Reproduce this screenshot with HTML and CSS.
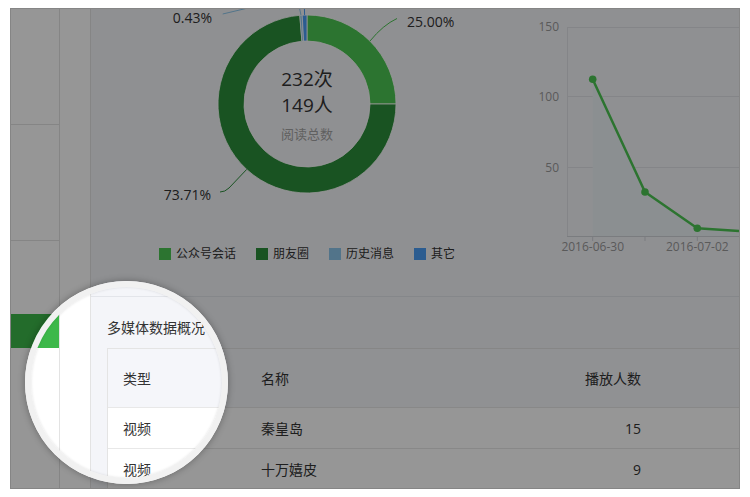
FILE: index.html
```html
<!DOCTYPE html>
<html lang="zh-CN">
<head>
<meta charset="utf-8">
<title>数据概况</title>
<link rel="stylesheet" href="styles.css">
</head>
<body>
<div class="frame">
  <aside class="nav">
    <div class="nav-item"></div>
    <div class="nav-item"></div>
    <div class="nav-gap"></div>
    <div class="nav-active"></div>
  </aside>
  <aside class="subnav"></aside>
  <main class="main">
    <section class="charts">
      <div class="donut-panel">
        <svg class="donut" width="430" height="235" viewBox="0 0 430 235">
          <g stroke="#ffffff" stroke-width="0.8" stroke-linejoin="round">
            <path fill="#4cc552" d="M216 6 A89 89 0 0 1 305 95 L279 95 A63 63 0 0 0 216 32 Z"/>
            <path fill="#2c8e3b" d="M305 95 A89 89 0 1 1 208.80 6.29 L210.90 32.21 A63 63 0 1 0 279 95 Z"/>
            <path fill="#8cc6ea" d="M208.80 6.29 A89 89 0 0 1 211.19 6.13 L212.60 32.09 A63 63 0 0 0 210.90 32.21 Z"/>
            <path fill="#4a9cf5" d="M211.19 6.13 A89 89 0 0 1 216 6 L216 32 A63 63 0 0 0 212.60 32.09 Z"/>
          </g>
          <g fill="none" stroke-width="1">
            <path stroke="#8cc6ea" d="M131.7 5 L206 -12.6 L210 6.2"/>
            <path stroke="#4a9cf5" d="M213.6 6 L213 -15"/>
            <path stroke="#4cc552" d="M279 32 Q292 16 306 9.5"/>
            <path stroke="#2c8e3b" d="M155.7 160.4 L138 179 Q134 183 129 183"/>
          </g>
          <g class="pie-label">
            <text x="121" y="14" text-anchor="end">0.43%</text>
            <text x="316" y="18">25.00%</text>
            <text x="120" y="191" text-anchor="end">73.71%</text>
          </g>
          <text class="pie-total" x="216" y="77" text-anchor="middle">232次</text>
          <text class="pie-total" x="216" y="103" text-anchor="middle">149人</text>
          <text class="pie-caption" x="216" y="130" text-anchor="middle">阅读总数</text>
        </svg>
        <ul class="legend">
          <li><span class="sw sw-session"></span>公众号会话</li>
          <li><span class="sw sw-moments"></span>朋友圈</li>
          <li><span class="sw sw-history"></span>历史消息</li>
          <li><span class="sw sw-other"></span>其它</li>
        </ul>
      </div>
      <div class="line-panel">
        <svg class="line-chart" width="218" height="287" viewBox="0 0 218 287">
          <g stroke="#e1e3e8" stroke-width="1">
            <line x1="47" y1="18.5" x2="218" y2="18.5"/>
            <line x1="47" y1="87.5" x2="218" y2="87.5"/>
            <line x1="47" y1="158.5" x2="218" y2="158.5"/>
            <line x1="46.5" y1="18" x2="46.5" y2="227"/>
          </g>
          <polygon fill="#edf3f6" points="71.7,70.3 124,183 176.3,219.3 218,222 218,227 71.7,227"/>
          <g stroke="#cfd3d9" stroke-width="1">
            <line x1="46" y1="227.5" x2="218" y2="227.5"/>
            <line x1="71.7" y1="227" x2="71.7" y2="232"/>
            <line x1="124" y1="227" x2="124" y2="232"/>
            <line x1="176.3" y1="227" x2="176.3" y2="232"/>
          </g>
          <polyline fill="none" stroke="#4cc552" stroke-width="2.5" stroke-linejoin="round" points="71.7,70.3 124,183 176.3,219.3 218,222"/>
          <g fill="#4cc552">
            <circle cx="71.7" cy="70.3" r="3.8"/>
            <circle cx="124" cy="183" r="3.8"/>
            <circle cx="176.3" cy="219.3" r="3.8"/>
          </g>
          <g class="axis-label">
            <text x="38" y="22" text-anchor="end">150</text>
            <text x="38" y="92" text-anchor="end">100</text>
            <text x="38" y="163" text-anchor="end">50</text>
            <text x="71.7" y="242" text-anchor="middle">2016-06-30</text>
            <text x="176.3" y="242" text-anchor="middle">2016-07-02</text>
          </g>
        </svg>
      </div>
    </section>
    <section class="media">
      <h2 class="media-title">多媒体数据概况</h2>
      <div class="table">
        <div class="row head"><span class="cell">类型</span><span class="cell">名称</span><span class="cell num">播放人数</span><span class="cell"></span></div>
        <div class="row"><span class="cell">视频</span><span class="cell">秦皇岛</span><span class="cell num">15</span><span class="cell"></span></div>
        <div class="row"><span class="cell">视频</span><span class="cell">十万嬉皮</span><span class="cell num">9</span><span class="cell"></span></div>
      </div>
    </section>
  </main>
  <div class="spotlight"></div>
</div>
</body>
</html>
```

FILE: styles.css
```css
* { box-sizing: border-box; }

html, body {
  margin: 0;
  padding: 0;
  background: #ffffff;
}

body {
  font-family: "Open Sans", "Noto Sans CJK SC", sans-serif;
  color: #333333;
}

.frame {
  position: relative;
  display: flex;
  width: 730px;
  height: 481px;
  margin: 8px 0 0 10px;
  border: 1px solid #858585;
  overflow: hidden;
  background: #ffffff;
}

.nav {
  flex: none;
  width: 49px;
  border-right: 1px solid #e3e3e3;
  display: flex;
  flex-direction: column;
}

.nav-item {
  height: 116px;
  border-bottom: 1px solid #e3e3e3;
}

.nav-gap { height: 73px; }

.nav-active {
  height: 34px;
  background: #3db84a;
}

.subnav {
  flex: none;
  width: 31px;
  border-right: 1px solid #e3e3e3;
}

.main {
  flex: 1;
  min-width: 0;
  background: #f4f5f9;
  display: flex;
  flex-direction: column;
}

.charts {
  flex: none;
  height: 288px;
  border-bottom: 1px solid #e3e5ea;
  display: flex;
}

.donut-panel {
  flex: none;
  width: 430px;
}

.donut, .line-chart { display: block; }

.pie-label {
  font-size: 14px;
  fill: #333333;
}

.pie-total {
  font-size: 19px;
  fill: #333333;
}

.pie-caption {
  font-size: 13px;
  fill: #a3a3a3;
}

.legend {
  list-style: none;
  margin: 0;
  padding: 0 0 0 68px;
  height: 20px;
  display: flex;
  align-items: center;
  gap: 20px;
  font-size: 12px;
  color: #333333;
}

.legend li {
  display: flex;
  align-items: center;
  gap: 5px;
  line-height: 20px;
}

.sw {
  width: 12px;
  height: 12px;
}

.sw-session { background: #4cc552; }
.sw-moments { background: #2c8e3b; }
.sw-history { background: #8cc6ea; }
.sw-other { background: #4a9cf5; }

.line-panel {
  flex: 1;
  min-width: 0;
}

.axis-label {
  font-size: 12px;
  fill: #999999;
}

.media {
  padding: 10px 0 0 16px;
}

.media-title {
  margin: 0;
  font-size: 14px;
  font-weight: normal;
  line-height: 41px;
  color: #333333;
}

.table {
  border-top: 1px solid #e4e4e4;
  border-left: 1px solid #e4e4e4;
  background: #ffffff;
}

.row {
  display: grid;
  grid-template-columns: 138px 260px 150px 1fr;
  align-items: center;
  height: 41px;
  border-bottom: 1px solid #e8e8e8;
  font-size: 14px;
}

.row.head {
  height: 59px;
  background: #f5f6fa;
}

.cell {
  padding: 0 15px;
  white-space: nowrap;
}

.cell.num { text-align: right; }

.spotlight {
  position: absolute;
  left: 14px;
  top: 272px;
  width: 203px;
  height: 203px;
  border: 6px solid #f1f1f1;
  border-radius: 50%;
  box-shadow:
    inset 0 0 3px rgba(0, 0, 0, 0.12),
    0 0 6px 1px rgba(0, 0, 0, 0.25),
    0 0 0 1200px rgba(0, 0, 0, 0.41);
}
```
